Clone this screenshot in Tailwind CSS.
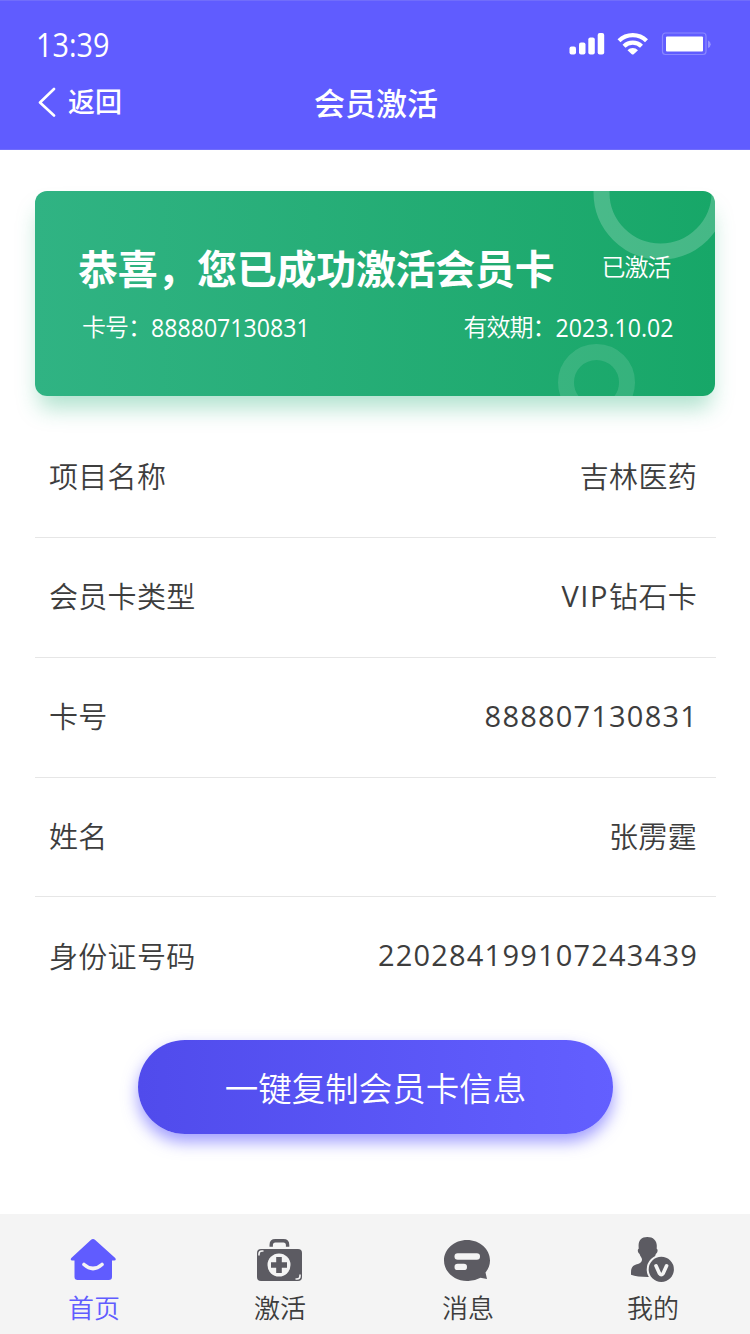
<!DOCTYPE html>
<html lang="zh-CN">
<head>
<meta charset="utf-8">
<title>会员激活</title>
<script src="https://cdn.jsdelivr.net/npm/@tailwindcss/browser@4"></script>
</head>
<body class="w-[750px] h-[1334px] overflow-hidden bg-white flex flex-col font-['Open_Sans','Noto_Sans_CJK_SC',sans-serif] font-[350] text-[#3d3d3d]">
  <header class="h-[150px] shrink-0 bg-[#605cff] text-white border-y border-[#716dfb] flex flex-col">
    <div class="h-[80px] pl-[36px] pr-[39px] flex items-center justify-between">
      <span class="text-[32px] leading-[40px] font-normal origin-left scale-x-[0.9] pt-[8px]">13:39</span>
      <svg class="w-[142px] h-[24px] mt-[5px]" viewBox="0 0 142 24" fill="#fff">
        <rect x="0.500" y="14.500" width="6.500" height="8" rx="2"/>
        <rect x="10" y="10.500" width="6.500" height="12" rx="2"/>
        <rect x="19.300" y="5.500" width="6.500" height="17" rx="2"/>
        <rect x="28.700" y="1" width="6.500" height="21.500" rx="2"/>
        <g fill="none" stroke="#fff" stroke-width="4.200">
          <path d="M50 8.800a19.500 19.500 0 0 1 27.500 0"/>
          <path d="M55 14.200a12.500 12.500 0 0 1 17.500 0"/>
        </g>
        <path d="M58.500 18.200a7.500 7.500 0 0 1 10.500 0l-4.300 4q-.95.800-1.900 0z"/>
        <rect x="93.500" y="1" width="43.500" height="21.500" rx="3" fill="none" stroke="#8a87ff" stroke-width="1.200"/>
        <rect x="97" y="4.500" width="37" height="15" rx="1"/>
        <path d="M139 8.500q2.700 1 2.700 3.700t-2.700 3.700z" fill="#9693ff"/>
      </svg>
    </div>
    <div class="h-[40px] grid grid-cols-[1fr_auto_1fr] items-center pl-[38px] pr-[36px]">
      <div class="flex items-center gap-[12px]">
        <svg class="w-[18px] h-[30px]" viewBox="0 0 18 30" fill="none" stroke="#fff" stroke-width="2.600" stroke-linecap="round" stroke-linejoin="round"><path d="M16 2 2 15.500 16 28.500"/></svg>
        <span class="text-[27px] leading-[36px] font-medium">返回</span>
      </div>
      <h1 class="text-[31px] leading-[40px] font-medium pt-[2px]">会员激活</h1>
    </div>
  </header>

  <main class="flex-1 flex flex-col px-[35px] pt-[41px]">
    <section class="relative h-[205px] shrink-0 rounded-[12px] bg-linear-to-r from-[#30b383] to-[#17a768] text-white shadow-[0_16px_22px_-4px_rgba(36,174,120,0.36)]">
      <svg class="absolute inset-0 w-[680px] h-[205px] rounded-[12px]" viewBox="0 0 680 205" fill="none" stroke="#fff" stroke-width="16">
        <circle cx="625.500" cy="1.500" r="59" stroke-opacity=".2"/>
        <circle cx="561.500" cy="191.500" r="30.500" stroke-opacity=".12"/>
      </svg>
      <div class="relative flex items-center justify-between h-[60px] mt-[48px] pl-[43px] pr-[45px]">
        <h2 class="text-[40px] leading-[60px] font-bold tracking-[-0.3px] whitespace-nowrap">恭喜，您已成功激活会员卡</h2>
        <span class="text-[24px] tracking-[-1.200px] leading-[36px] -mt-[4px]">已激活</span>
      </div>
      <div class="relative flex items-center justify-between h-[36px] mt-[10px] pl-[47px] pr-[42px] text-[24px] tracking-[-1px] leading-[36px]">
        <span class="flex items-center">卡号：<span class="origin-left scale-x-[0.925] text-[25px] font-normal tracking-[0]">888807130831</span></span>
        <span class="flex items-center">有效期：<span class="-ml-[10px] origin-right scale-x-[0.925] text-[25px] font-normal tracking-[0]">2023.10.02</span></span>
      </div>
    </section>

    <dl class="mt-[22px] w-[681px] text-[29px] leading-[40px] tracking-[0.300px]">
      <div class="h-[120px] flex items-center justify-between pl-[14px] pr-[19px] pb-[1px] border-b border-[#e6e6e6]"><dt>项目名称</dt><dd>吉林医药</dd></div>
      <div class="h-[120px] flex items-center justify-between pl-[14px] pr-[19px] pb-[1px] border-b border-[#e6e6e6]"><dt>会员卡类型</dt><dd><span class="relative -top-px font-normal tracking-[1.600px]">VIP</span>钻石卡</dd></div>
      <div class="h-[120px] flex items-center justify-between pl-[14px] pr-[18px] pb-[1px] border-b border-[#e6e6e6]"><dt>卡号</dt><dd class="font-normal tracking-[1.200px] pb-[3px]">888807130831</dd></div>
      <div class="h-[119px] flex items-center justify-between pl-[14px] pr-[19px] border-b border-[#e6e6e6]"><dt>姓名</dt><dd>张雳霆</dd></div>
      <div class="h-[120px] flex items-center justify-between pl-[14px] pr-[18px]"><dt>身份证号码</dt><dd class="font-normal tracking-[1.200px] pb-[4px]">220284199107243439</dd></div>
    </dl>

    <button class="mt-[23px] ml-[103px] pt-[2px] w-[475px] h-[94px] rounded-full bg-linear-to-r from-[#504bec] to-[#635fff] text-white text-[33.500px] leading-[48px] shadow-[0_8px_16px_rgba(96,92,255,0.6)]">一键复制会员卡信息</button>
  </main>

  <nav class="h-[120px] shrink-0 bg-[#f4f4f4] grid grid-cols-[188px_184px_192px_178px] pt-[22px] text-[26px] leading-[36px]">
    <a class="flex flex-col items-center gap-[6px] text-[#605cff]">
      <svg class="w-[48px] h-[48px] mr-[2px]" viewBox="0 0 48 48"><path fill="#605cff" d="M21.800 3.900q2.200-1.900 4.400 0L46.200 22q1.500 2.500-1 2.500H43v16.300q0 3.200-3.200 3.200H8.700q-3.200 0-3.200-3.200V24.500H3.300q-2.500 0-1-2.500z"/><path d="M15 28.500q9 8 18 0" fill="none" stroke="#f4f4f4" stroke-width="3.600" stroke-linecap="round"/></svg>
      <span>首页</span>
    </a>
    <a class="flex flex-col items-center gap-[6px]">
      <svg class="w-[48px] h-[48px] mr-[2px]" viewBox="0 0 48 48"><path d="M16.200 10.800V9q0-4.200 4.200-4.200h8q4.200 0 4.200 4.200v1.800" fill="none" stroke="#5c5b62" stroke-width="3.400"/><rect x="2" y="13" width="45" height="32" rx="4" fill="#5c5b62"/><circle cx="24" cy="29" r="11.500" fill="#f4f4f4"/><path d="M21.200 21h5.600v5.200H32v5.600h-5.200V37h-5.600v-5.200H16v-5.600h5.200z" fill="#5c5b62"/><path d="M4 19.500V18q0-3 3-3h1.500M45 38.500V40q0 3-3 3h-1.500" fill="none" stroke="#f4f4f4" stroke-width="1.600"/></svg>
      <span>激活</span>
    </a>
    <a class="flex flex-col items-center gap-[6px]">
      <svg class="w-[48px] h-[48px] mr-[2px]" viewBox="0 0 48 48"><path fill="#5c5b62" d="M24 4C36.700 4 47 13.200 47 24.500c0 4.600-1.700 8.700-4.500 11.900L44 43l-6.500-1.200A25 25 0 0 1 24 45C11.300 45 1 35.800 1 24.500S11.300 4 24 4z"/><rect x="11.500" y="17.300" width="25.500" height="6.500" rx="3.200" fill="#f4f4f4"/><rect x="11.500" y="27.700" width="12.500" height="6.400" rx="3.200" fill="#f4f4f4"/></svg>
      <span>消息</span>
    </a>
    <a class="flex flex-col items-center gap-[6px]">
      <svg class="w-[48px] h-[48px]" viewBox="0 0 48 48"><path fill="#5c5b62" d="M18.300.9c6 0 9.700 3.600 9.500 9.300l-.1 2.600c1.600.6.900 4.300-.9 5.200-.6 2.800-1.600 3.700-2 5.500-.4 3.300 3 5.300 7.200 6.500V41H19Q8 41 2 38.800c-.2-6 .8-8.500 4.500-10 3.500-1.300 6.500-2 6.500-5.300 0-1.800-1.800-2.700-2.400-5.500-1.800-.9-2.500-4.600-.9-5.200l-.1-2.600C9.300 4.500 12.300.9 18.300.9z"/><circle cx="32.300" cy="33.400" r="13.600" fill="#5c5b62" stroke="#f4f4f4" stroke-width="2"/><path d="m27 29.800 3.500 7.700q1.800 2.500 3.600 0l3.500-7.700" fill="none" stroke="#f4f4f4" stroke-width="3.600" stroke-linecap="round" stroke-linejoin="round"/></svg>
      <span>我的</span>
    </a>
  </nav>
</body>
</html>
